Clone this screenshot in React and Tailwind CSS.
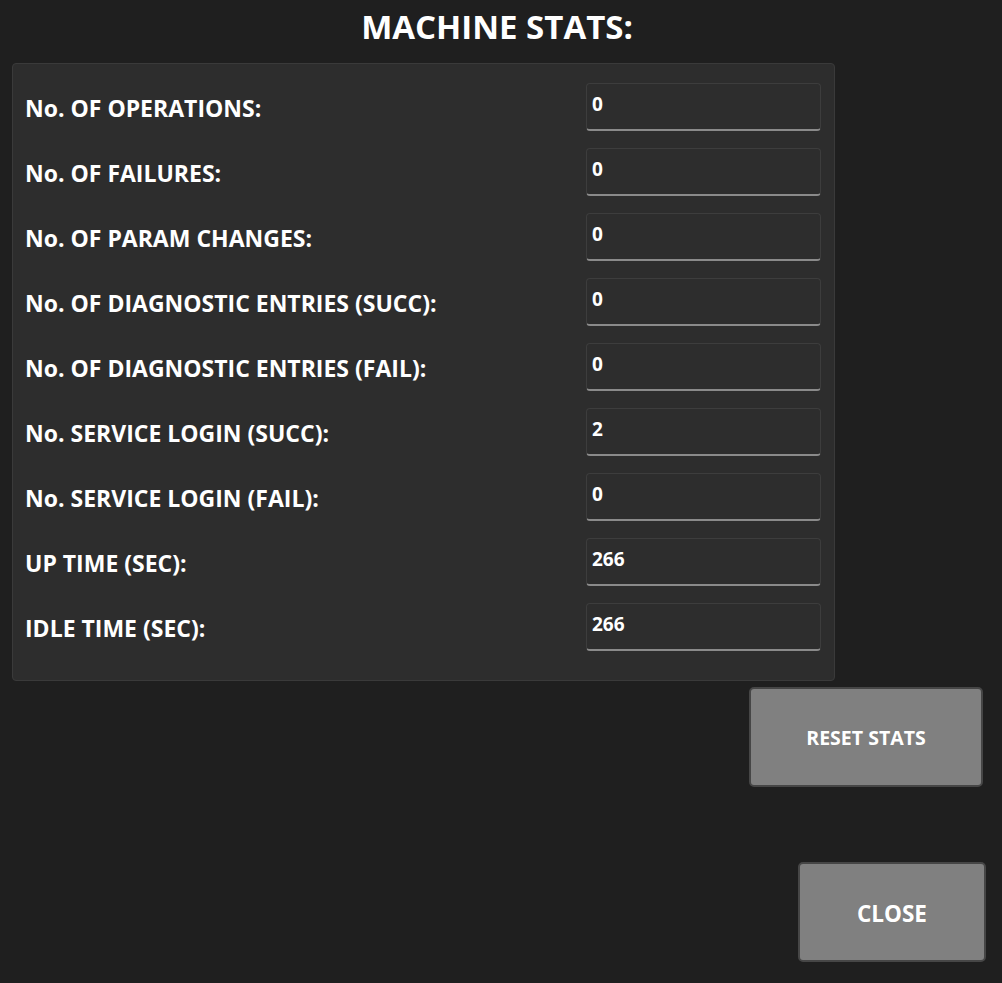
import React from 'react';

const STATS = [
  { label: 'No. OF OPERATIONS:', value: '0' },
  { label: 'No. OF FAILURES:', value: '0' },
  { label: 'No. OF PARAM CHANGES:', value: '0' },
  { label: 'No. OF DIAGNOSTIC ENTRIES (SUCC):', value: '0' },
  { label: 'No. OF DIAGNOSTIC ENTRIES (FAIL):', value: '0' },
  { label: 'No. SERVICE LOGIN (SUCC):', value: '2' },
  { label: 'No. SERVICE LOGIN (FAIL):', value: '0' },
  { label: 'UP TIME (SEC):', value: '266' },
  { label: 'IDLE TIME (SEC):', value: '266' },
];

const App = () => {
  return (
    <div
      className="w-[1002px] h-[983px] bg-[#1f1f1f] text-white flex flex-col"
      style={{ fontFamily: '"Open Sans", "Noto Sans", sans-serif' }}
    >
      <h1 className="h-[63px] pt-[4px] text-center text-[33px] font-bold leading-[46px] pr-[8px]">
        MACHINE STATS:
      </h1>

      <div className="ml-[12px] w-[823px] bg-[#2d2d2d] border border-[#3a3a3a] rounded-[4px] pt-[19px] pb-[29px] pl-[12px] pr-[13px] flex flex-col gap-[17px]">
        {STATS.map((s) => (
          <div key={s.label} className="flex items-center justify-between">
            <span className="text-[23px] font-bold leading-none pt-[2px]">{s.label}</span>
            <div className="w-[235px] h-[48px] rounded-[4px] border border-[#3d3d3d] border-b-2 border-b-[#8a8a8a] bg-[#2d2d2d] px-[5px] pt-[8px] text-[19px] font-bold leading-[24px]">
              {s.value}
            </div>
          </div>
        ))}
      </div>

      <div className="flex justify-end pr-[19px] mt-[6px]">
        <button className="w-[234px] h-[100px] bg-[#808080] border-2 border-[#464646] rounded-[5px] text-[19.5px] font-bold text-white pt-[1px]">
          RESET STATS
        </button>
      </div>

      <div className="flex justify-end pr-[16px] mt-[75px]">
        <button className="w-[188px] h-[100px] bg-[#808080] border-2 border-[#464646] rounded-[5px] text-[22.5px] font-bold text-white pt-[3px]">
          CLOSE
        </button>
      </div>
    </div>
  );
};

export default App;
